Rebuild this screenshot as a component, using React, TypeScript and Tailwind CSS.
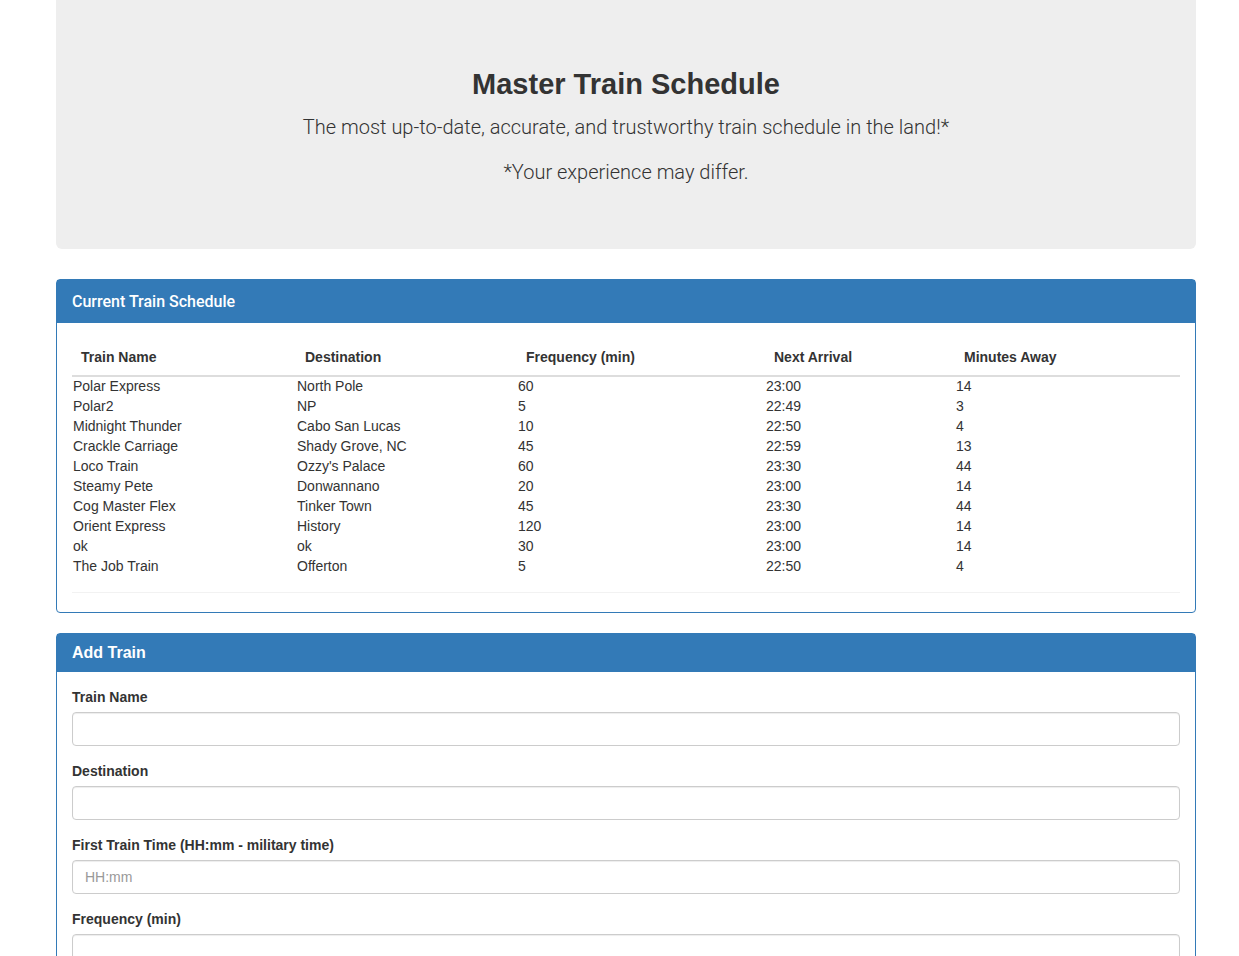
import React from 'react';

interface Train {
  name: string;
  destination: string;
  frequency: string;
  next: string;
  away: string;
}

const trains: Train[] = [
  { name: 'Polar Express', destination: 'North Pole', frequency: '60', next: '23:00', away: '14' },
  { name: 'Polar2', destination: 'NP', frequency: '5', next: '22:49', away: '3' },
  { name: 'Midnight Thunder', destination: 'Cabo San Lucas', frequency: '10', next: '22:50', away: '4' },
  { name: 'Crackle Carriage', destination: 'Shady Grove, NC', frequency: '45', next: '22:59', away: '13' },
  { name: 'Loco Train', destination: "Ozzy's Palace", frequency: '60', next: '23:30', away: '44' },
  { name: 'Steamy Pete', destination: 'Donwannano', frequency: '20', next: '23:00', away: '14' },
  { name: 'Cog Master Flex', destination: 'Tinker Town', frequency: '45', next: '23:30', away: '44' },
  { name: 'Orient Express', destination: 'History', frequency: '120', next: '23:00', away: '14' },
  { name: 'ok', destination: 'ok', frequency: '30', next: '23:00', away: '14' },
  { name: 'The Job Train', destination: 'Offerton', frequency: '5', next: '22:50', away: '4' },
];

const cols = ['w-[224px]', 'w-[221px]', 'w-[248px]', 'w-[190px]', 'flex-1'];

const Field: React.FC<{ label: string; placeholder?: string }> = ({ label, placeholder }) => (
  <div className="mb-[15px]">
    <label className="block text-[14px] font-bold leading-[20px] mb-[5px]">{label}</label>
    <input
      type="text"
      placeholder={placeholder}
      className="block w-full h-[34px] px-3 text-[14px] border border-[#ccc] rounded-[4px] shadow-[inset_0_1px_1px_rgba(0,0,0,0.075)] placeholder:text-[#999] outline-none"
    />
  </div>
);

const App: React.FC = () => {
  return (
    <div className="min-h-screen bg-white text-[#333] font-['Liberation_Sans',Arial,sans-serif]">
      <div className="ml-[56px] w-[1140px]">
        <div className="bg-[#eee] rounded-b-[6px] h-[249px] pt-[66px] text-center">
          <h1 className="text-[29px] font-bold leading-[36px] text-[#333]">Master Train Schedule</h1>
          <p className="text-[20px] font-light leading-[30px] mt-[10px] font-['Roboto',sans-serif]">
            The most up-to-date, accurate, and trustworthy train schedule in the land!*
          </p>
          <p className="text-[20px] font-light leading-[30px] mt-[15px] font-['Roboto',sans-serif]">*Your experience may differ.</p>
        </div>

        <div className="mt-[30px] border border-[#337ab7] rounded-[4px]">
          <div className="bg-[#337ab7] h-[43px] px-[15px] flex items-center text-white text-[16px] font-medium font-['Roboto',sans-serif]">
            Current Train Schedule
          </div>
          <div className="px-[15px] pt-[24px] pb-[19px]">
            <div className="flex border-b-2 border-[#ddd] pb-[8px] text-[14px] font-bold leading-[20px]">
              {['Train Name', 'Destination', 'Frequency (min)', 'Next Arrival', 'Minutes Away'].map((h, i) => (
                <div key={h} className={`${cols[i]} pl-[9px]`}>{h}</div>
              ))}
            </div>
            <div className="-mt-[1px] pl-[1px] pb-[16px] border-b border-[#f2f2f2]">
              {trains.map((t, r) => (
                <div key={r} className="flex text-[14px] leading-[20px]">
                  <div className={cols[0]}>{t.name}</div>
                  <div className={cols[1]}>{t.destination}</div>
                  <div className={cols[2]}>{t.frequency}</div>
                  <div className={cols[3]}>{t.next}</div>
                  <div className={cols[4]}>{t.away}</div>
                </div>
              ))}
            </div>
          </div>
        </div>

        <div className="mt-[20px] border border-[#337ab7] rounded-t-[4px]">
          <div className="bg-[#337ab7] h-[38px] px-[15px] flex items-center text-white text-[16px] font-bold">
            Add Train
          </div>
          <div className="px-[15px] pt-[15px]">
            <Field label="Train Name" />
            <Field label="Destination" />
            <Field label="First Train Time (HH:mm - military time)" placeholder="HH:mm" />
            <Field label="Frequency (min)" />
          </div>
        </div>
      </div>
    </div>
  );
};

export default App;
